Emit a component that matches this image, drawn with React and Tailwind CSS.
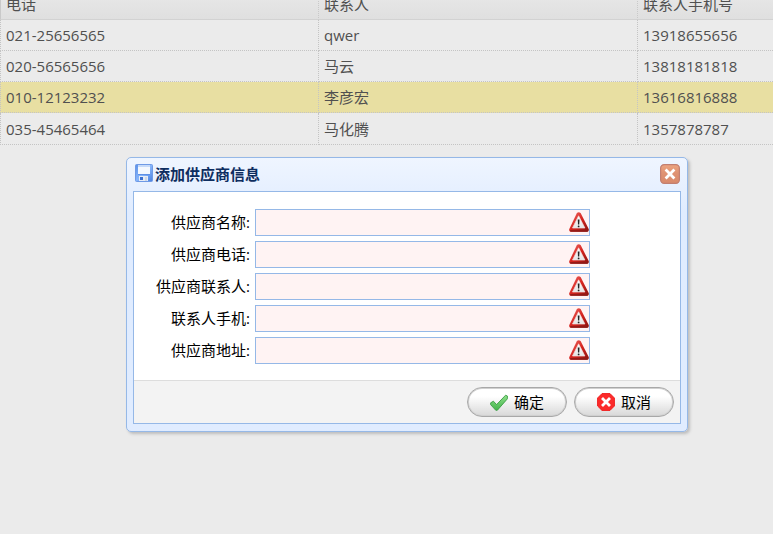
import React, { useState } from 'react';

const suppliers = [
    { phone: '021-25656565', contact: 'qwer', mobile: '13918655656' },
    { phone: '020-56565656', contact: '马云', mobile: '13818181818' },
    { phone: '010-12123232', contact: '李彦宏', mobile: '13616816888' },
    { phone: '035-45465464', contact: '马化腾', mobile: '1357878787' },
];

const fields = [
    { id: 'name', label: '供应商名称:' },
    { id: 'phone', label: '供应商电话:' },
    { id: 'contact', label: '供应商联系人:' },
    { id: 'mobile', label: '联系人手机:' },
    { id: 'address', label: '供应商地址:' },
];

function SaveIcon() {
    return (
        <svg className="size-[18px] shrink-0" viewBox="0 0 18 18" aria-hidden="true">
            <defs>
                <linearGradient id="disk" x1="0" y1="0" x2="1" y2="1">
                    <stop offset="0" stopColor="#5c91e8" />
                    <stop offset=".5" stopColor="#86b5fb" />
                    <stop offset="1" stopColor="#4a80e0" />
                </linearGradient>
            </defs>
            <rect x=".5" y=".5" width="17" height="17" rx="1" fill="url(#disk)" stroke="#6f9ae6" />
            <rect x="3" y="1" width="12" height="9" fill="#f4f8fe" />
            <rect x="3" y="1" width="12" height="2" fill="#c6daf9" />
            <path d="M3 10h12v1H3z" fill="#5f90e6" />
            <rect x="4" y="12" width="9" height="5" fill="#e6ecf6" />
            <rect x="5" y="13" width="3" height="3" fill="#3c70cf" />
            <path d="M10 13h2v4h-2z" fill="#cfd8e6" />
        </svg>
    );
}

function WarningIcon() {
    return (
        <svg className="size-5" viewBox="0 0 20 20" aria-hidden="true">
            <defs>
                <linearGradient id="warn" x1="0" y1="0" x2="1" y2="1">
                    <stop offset="0" stopColor="#f0706a" />
                    <stop offset=".5" stopColor="#d6231e" />
                    <stop offset="1" stopColor="#861310" />
                </linearGradient>
                <linearGradient id="warnFace" x1="0" y1="0" x2="0" y2="1">
                    <stop offset="0" stopColor="#ffffff" />
                    <stop offset="1" stopColor="#e4e4e4" />
                </linearGradient>
            </defs>
            <path d="M7.9 1.1Q9.8-.7 11.6 1.1L19.7 17Q20.4 19.7 18 19.8H2Q-.4 19.7.3 17Z" fill="url(#warn)" />
            <path d="M1.2 18.9h17.6" stroke="#8f1b18" strokeWidth="1.6" />
            <path d="M9.6 3.8 15.9 16H3.5Z" fill="url(#warnFace)" stroke="#f6dedd" strokeWidth=".7" strokeLinejoin="round" />
            <path d="M8.7 7.4h1.8l-.3 5.2H9z" fill="#222222" />
            <circle cx="9.6" cy="14.4" r=".9" fill="#222222" />
        </svg>
    );
}

function CheckIcon() {
    return (
        <svg className="size-[18px]" viewBox="0 0 18 18" aria-hidden="true">
            <defs>
                <linearGradient id="tick" x1="0" y1="0" x2="0" y2="1">
                    <stop offset="0" stopColor="#8fe08a" />
                    <stop offset="1" stopColor="#43b44b" />
                </linearGradient>
            </defs>
            <path
                d="M.7 9.8 3.4 8.2 6.6 11.6 15.6 2.2 17.4 3V5.8L7.4 17.2 5.8 17.3.6 11.6Z"
                fill="url(#tick)"
                stroke="#3a9c43"
                strokeWidth=".9"
                strokeLinejoin="round"
            />
        </svg>
    );
}

function CancelIcon() {
    return (
        <svg className="size-[18px]" viewBox="0 0 18 18" aria-hidden="true">
            <path d="M5 .6h8l4.4 4.4v8L13 17.4H5L.6 13V5z" fill="#fb2b2b" stroke="#f02020" strokeLinejoin="round" />
            <path d="m6 6 6 6m0-6-6 6" stroke="#fff" strokeWidth="2.8" strokeLinecap="square" />
        </svg>
    );
}

function CloseIcon() {
    return (
        <svg className="size-5" viewBox="0 0 20 20" aria-hidden="true">
            <defs>
                <linearGradient id="close" x1="0" y1="0" x2="0" y2="1">
                    <stop offset="0" stopColor="#eda581" />
                    <stop offset=".45" stopColor="#df9272" />
                    <stop offset="1" stopColor="#d98a6c" />
                </linearGradient>
            </defs>
            <rect x=".6" y=".6" width="18.8" height="18.8" rx="3.6" fill="url(#close)" stroke="#c27f71" strokeWidth="1.2" />
            <path d="m6.6 6.6 6.8 6.8m0-6.8-6.8 6.8" stroke="#fff" strokeWidth="2.8" strokeLinecap="square" />
        </svg>
    );
}

function DialogButton({ icon, children, ...props }) {
    return (
        <button
            type="button"
            className="flex h-[30px] w-[100px] items-center justify-center gap-1.5 rounded-full border border-[#a8a8a8] bg-linear-to-b from-white from-30% to-[#d8d8d8] text-[15px] text-black shadow-[inset_0_0_0_1px_#d0d0d0]"
            {...props}
        >
            {icon}
            <span>{children}</span>
        </button>
    );
}

function SupplierTable() {
    const cell = 'border-r border-b border-dotted border-[#c4c4c4] px-[5px] font-normal first:border-l';

    return (
        <div className="overflow-hidden">
            <table className="-mt-[11px] w-[957px] table-fixed border-separate border-spacing-0 text-left">
                <thead className="bg-linear-to-b from-[#e9e9e9] to-[#dfdfdf]">
                    <tr className="h-[31px]">
                        {['电话', '联系人', '联系人手机号'].map((title) => (
                            <th
                                key={title}
                                className="border-r border-b border-[#c9c9c9] border-b-[#d2d2d2] px-[5px] font-normal [border-left-style:dotted] [border-right-style:dotted] first:border-l"
                            >
                                {title}
                            </th>
                        ))}
                    </tr>
                </thead>
                <tbody>
                    {suppliers.map((row, i) => (
                        <tr key={row.phone} className={i === 2 ? 'h-[31px] bg-[#e8dfa2]' : 'h-[31px] last:h-8'}>
                            <td className={cell}>{row.phone}</td>
                            <td className={cell}>{row.contact}</td>
                            <td className={cell}>{row.mobile}</td>
                        </tr>
                    ))}
                </tbody>
            </table>
        </div>
    );
}

function SupplierDialog({ onClose }) {
    const [values, setValues] = useState({});

    return (
        <section
            role="dialog"
            aria-labelledby="dialog-title"
            className="absolute top-[157px] left-[126px] w-[562px] rounded-[5px] border border-[#95b8e7] bg-linear-to-b from-[#eff5ff] to-[#e0ecff] to-20% px-1.5 pt-1.5 pb-[7px] text-black shadow-[2px_2px_3px_#bdbdbd]"
        >
            <header className="flex h-[27px] items-start gap-0.5 pr-px pl-0.5">
                <SaveIcon />
                <h2 id="dialog-title" className="flex-1 text-[15px] leading-5 font-bold text-[#0e2d5f]">
                    添加供应商信息
                </h2>
                <button type="button" aria-label="关闭" onClick={onClose}>
                    <CloseIcon />
                </button>
            </header>
            <form className="border border-[#95b8e7] bg-white" onSubmit={(e) => e.preventDefault()}>
                <div className="flex flex-col gap-[5px] pt-[17px] pb-4">
                    {fields.map((field) => (
                        <div key={field.id} className="flex items-start gap-[5px]">
                            <label htmlFor={field.id} className="w-[116px] text-right leading-[27px]">
                                {field.label}
                            </label>
                            <div className="relative">
                                <input
                                    id={field.id}
                                    type="text"
                                    value={values[field.id] || ''}
                                    onChange={(e) => setValues({ ...values, [field.id]: e.target.value })}
                                    className="block h-[27px] w-[335px] border border-[#95b8e7] bg-[#fff3f3] pr-6 pl-1 outline-none"
                                />
                                {!values[field.id] && (
                                    <span className="absolute top-[3px] right-px">
                                        <WarningIcon />
                                    </span>
                                )}
                            </div>
                        </div>
                    ))}
                </div>
                <footer className="flex justify-end gap-[7px] border-t border-[#dddddd] bg-[#f3f3f3] p-1.5">
                    <DialogButton icon={<CheckIcon />}>确定</DialogButton>
                    <DialogButton icon={<CancelIcon />} onClick={onClose}>
                        取消
                    </DialogButton>
                </footer>
            </form>
        </section>
    );
}

export default function App() {
    const [open, setOpen] = useState(true);

    return (
        <main className="relative min-h-screen overflow-hidden bg-[#ebebeb] font-['Open_Sans','Noto_Sans_CJK_SC',sans-serif] text-[15px] leading-5 text-[#505050]">
            <SupplierTable />
            {open && <SupplierDialog onClose={() => setOpen(false)} />}
        </main>
    );
}
